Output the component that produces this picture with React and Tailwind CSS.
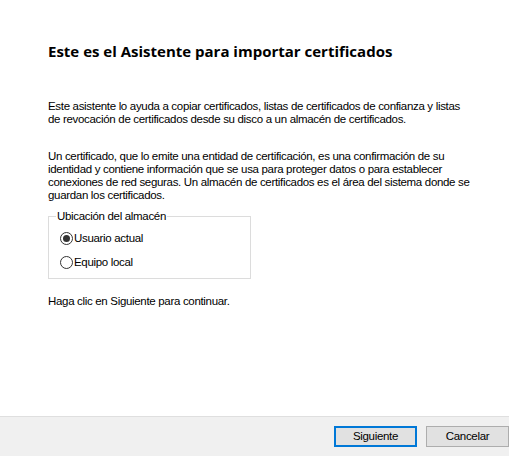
import React from 'react';

const body = { fontFamily: '"Liberation Sans", Arial, sans-serif' };

function Radio({ checked, label }) {
  return (
    <label className="flex h-[24px] items-center gap-[1px]">
      <svg width="13" height="13" viewBox="0 0 13 13" className="shrink-0">
        <circle cx="6.5" cy="6.5" r="6" fill="#fff" stroke="#333" strokeWidth="1" />
        {checked && <circle cx="6.5" cy="6.5" r="3.5" fill="#333" />}
      </svg>
      <span>{label}</span>
    </label>
  );
}

export default function App() {
  return (
    <div
      className="flex h-[456px] w-[509px] flex-col bg-white text-[11.5px] leading-[13px] tracking-[-0.32px] text-black"
      style={body}
    >
      {/* ── Wizard body ── */}
      <div className="flex-1 pl-[48px] pt-[42px]">
        <h1
          className="text-[15px] font-bold leading-[18px] tracking-normal"
          style={{ fontFamily: '"Open Sans", Verdana, sans-serif' }}
        >
          Este es el Asistente para importar certificados
        </h1>

        <p className="mt-[40px] w-[425px]">
          Este asistente lo ayuda a copiar certificados, listas de certificados de confianza y listas de revocación de certificados desde su disco a un almacén de certificados.
        </p>

        <p className="mt-[24px] w-[425px]">
          Un certificado, que lo emite una entidad de certificación, es una confirmación de su identidad y contiene información que se usa para proteger datos o para establecer conexiones de red seguras. Un almacén de certificados es el área del sistema donde se guardan los certificados.
        </p>

        <fieldset className="mt-[8px] w-[203px] border border-[#dcdcdc] pb-[4px] pl-[11px]">
          <legend className="-ml-[4px] px-[1px]">Ubicación del almacén</legend>
          <div className="pt-[3px]">
            <Radio checked label="Usuario actual" />
            <Radio label="Equipo local" />
          </div>
        </fieldset>

        <p className="mt-[16px]">Haga clic en Siguiente para continuar.</p>
      </div>

      {/* ── Footer buttons ── */}
      <div className="flex h-[40px] justify-end gap-[9px] border-t border-[#dfdfdf] bg-[#f0f0f0] pt-[9px]">
        <button className="h-[21px] w-[83px] border-2 border-[#0078d7] bg-[#e1e1e1] leading-[17px]">
          Siguiente
        </button>
        <button className="h-[21px] w-[83px] border border-[#adadad] bg-[#e1e1e1] leading-[19px]">
          Cancelar
        </button>
      </div>
    </div>
  );
}
